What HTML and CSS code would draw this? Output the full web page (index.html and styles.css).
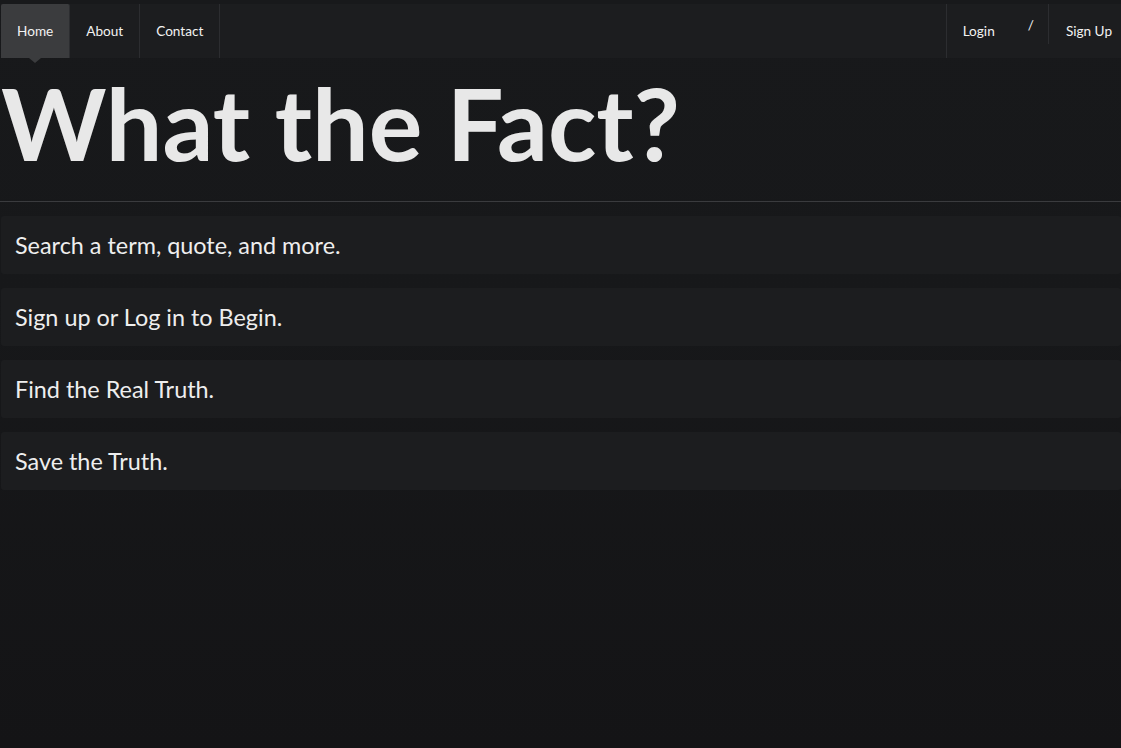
FILE: index.html
```html
<!DOCTYPE html>
<html>
<head>
<meta charset="utf-8">
<link rel="stylesheet" href="styles.css">
</head>
<body>
<nav class="navbar">
  <ul class="nav nav-left">
    <li class="nav-item active"><a href="#">Home</a></li>
    <li class="nav-item"><a href="#">About</a></li>
    <li class="nav-item"><a href="#">Contact</a></li>
  </ul>
  <ul class="nav nav-right">
    <li class="nav-item login"><a href="#">Login</a></li>
    <li class="slash">/</li>
    <li class="nav-item signup"><a href="#">Sign Up</a></li>
  </ul>
</nav>
<main class="content">
  <h1 class="title">What the Fact?</h1>
  <hr class="rule">
  <div class="cards">
    <div class="card">Search a term, quote, and more.</div>
    <div class="card">Sign up or Log in to Begin.</div>
    <div class="card">Find the Real Truth.</div>
    <div class="card">Save the Truth.</div>
  </div>
</main>
</body>
</html>
```
FILE: styles.css
```css
html {
  margin: 0;
  padding: 0;
  min-height: 100%;
  background: linear-gradient(to bottom, #18191b 0%, #17181a 40%, #141416 100%);
}
body {
  margin: 0;
  padding: 4px 0 0 1px;
  color: #e8e8e8;
  font-family: Lato, "Open Sans", sans-serif;
}
.navbar {
  display: flex;
  justify-content: space-between;
  background: #1c1d1f;
  height: 54px;
}
.nav {
  display: flex;
  list-style: none;
  margin: 0;
  padding: 0;
}
.nav-item {
  position: relative;
  display: flex;
  align-items: center;
}
.nav-item a {
  color: #f2f2f2;
  text-decoration: none;
  font-size: 13.6px;
  padding: 0 16px;
  line-height: 54px;
}
.nav-left .nav-item {
  border-right: 1px solid #2c2d30;
}
.nav-item.active {
  background: #3b3c3e;
  border-radius: 2px 2px 0 0;
}
.nav-item.active::after {
  content: "";
  position: absolute;
  left: 50%;
  bottom: -5px;
  margin-left: -6px;
  border-left: 6px solid transparent;
  border-right: 6px solid transparent;
  border-top: 5px solid #3b3c3e;
}
.nav-right .login {
  border-left: 1px solid #2c2d30;
}
.slash {
  color: #f2f2f2;
  font-size: 13.6px;
  padding: 14px 14px 0 17px;
  line-height: 14px;
  border-right: 1px solid #2c2d30;
  height: 26px;
  box-sizing: content-box;
}
.nav-right .signup a {
  padding: 0 9px 0 17px;
}
.content {
  display: flex;
  flex-direction: column;
}
.title {
  margin: 4px 0 0 0;
  font-size: 100.5px;
  font-weight: 700;
  line-height: 1.2;
  color: #e8e8e8;
}
.rule {
  margin: 18px 0 0 -1px;
  border: 0;
  border-top: 1px solid #3a3b3e;
  height: 0;
}
.cards {
  display: flex;
  flex-direction: column;
  gap: 14px;
  margin-top: 14px;
}
.card {
  background: #1c1d1f;
  border-radius: 3px;
  height: 58px;
  display: flex;
  align-items: center;
  padding-left: 14px;
  font-size: 23.4px;
  color: #eeeeee;
}
```
